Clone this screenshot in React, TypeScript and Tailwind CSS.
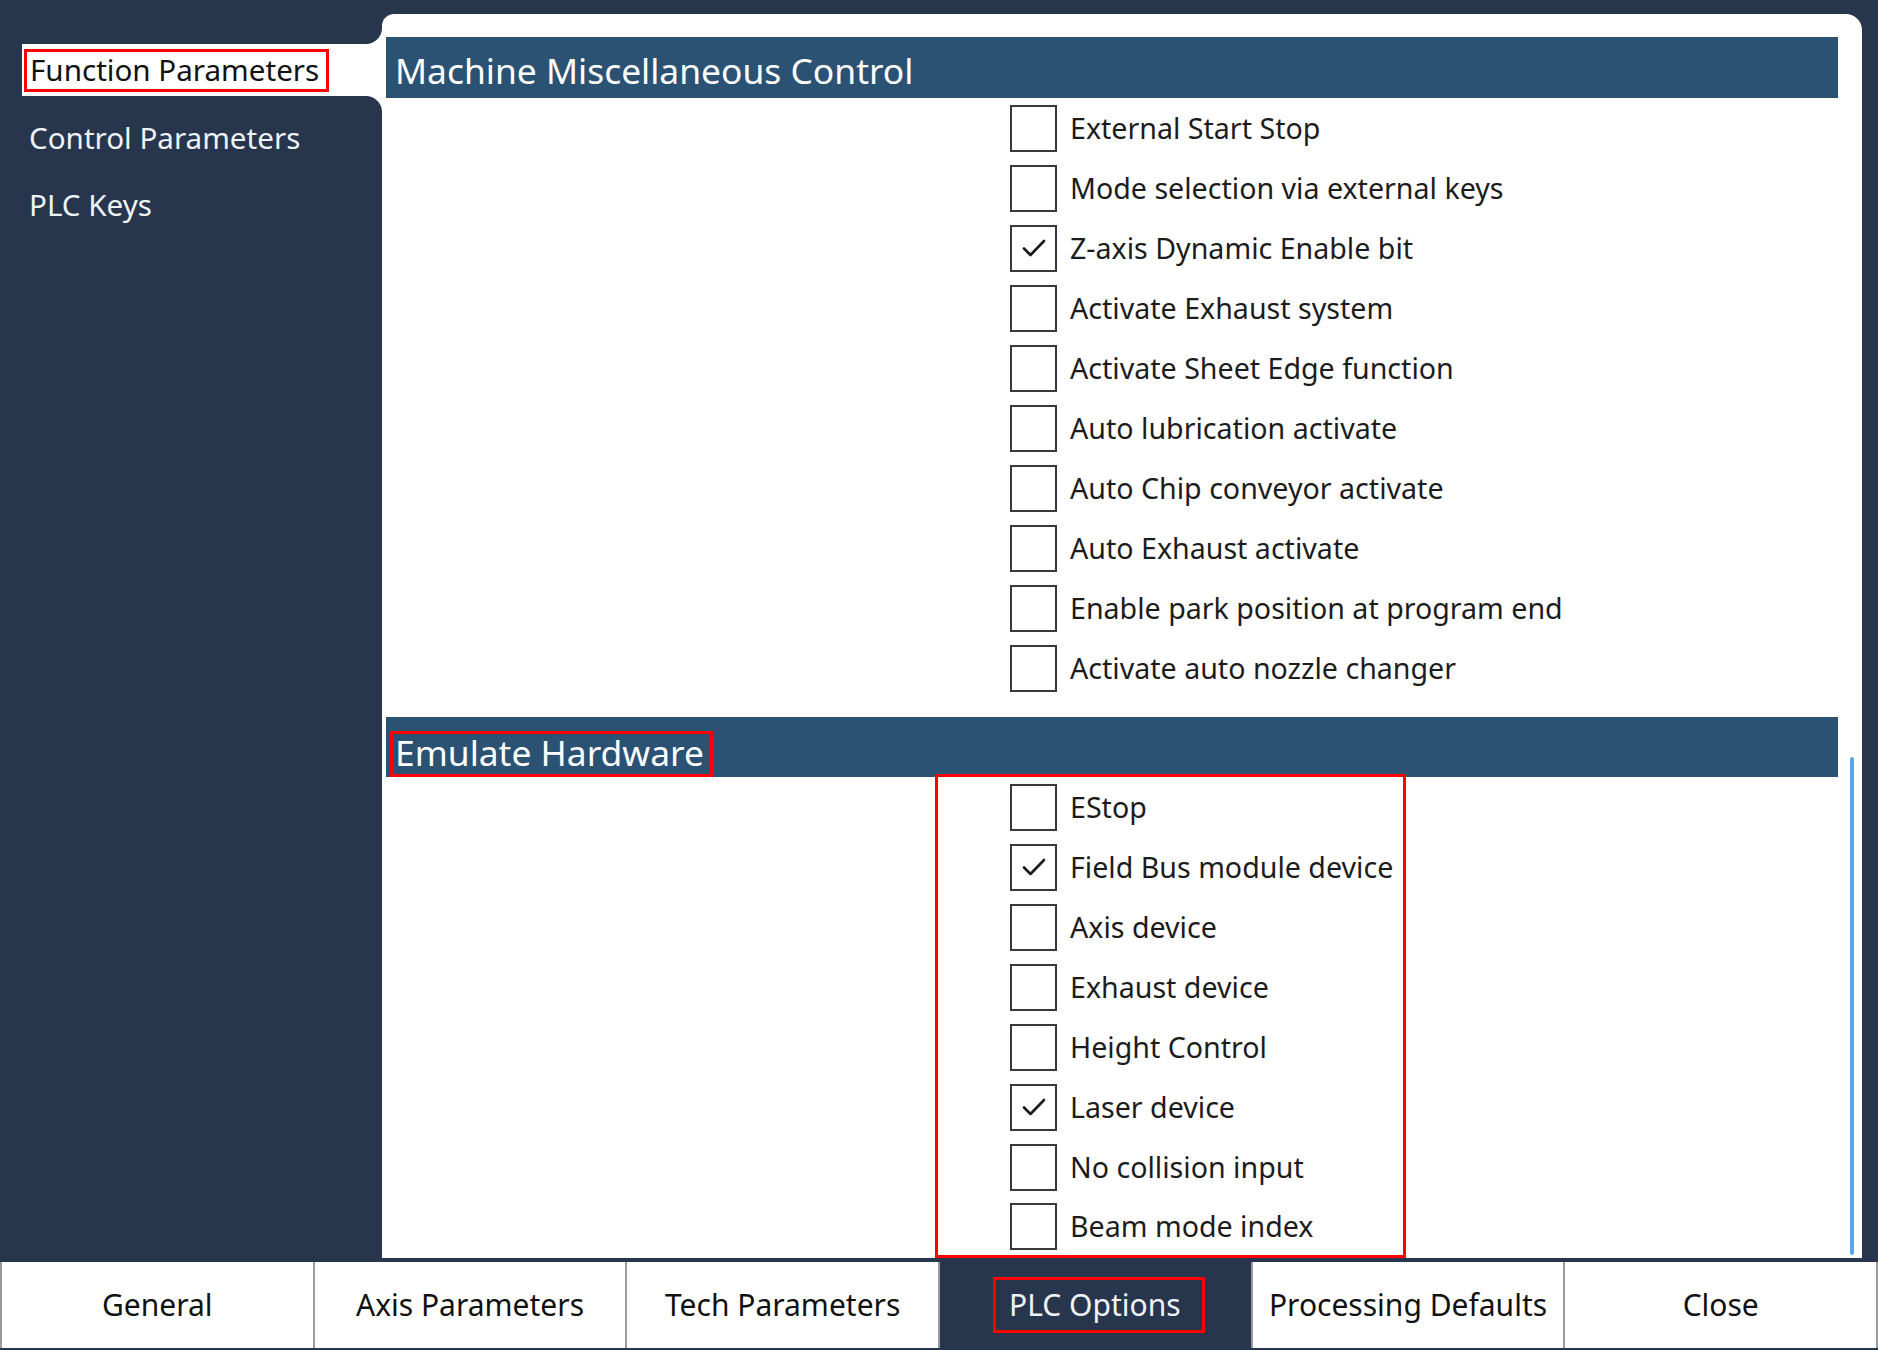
import React from 'react';

const DARK = 'bg-[#27354d]';

const miscItems: { label: string; checked: boolean }[] = [
  { label: 'External Start Stop', checked: false },
  { label: 'Mode selection via external keys', checked: false },
  { label: 'Z-axis Dynamic Enable bit', checked: true },
  { label: 'Activate Exhaust system', checked: false },
  { label: 'Activate Sheet Edge function', checked: false },
  { label: 'Auto lubrication activate', checked: false },
  { label: 'Auto Chip conveyor activate', checked: false },
  { label: 'Auto Exhaust activate', checked: false },
  { label: 'Enable park position at program end', checked: false },
  { label: 'Activate auto nozzle changer', checked: false },
];

const hardwareItems: { label: string; checked: boolean }[] = [
  { label: 'EStop', checked: false },
  { label: 'Field Bus module device', checked: true },
  { label: 'Axis device', checked: false },
  { label: 'Exhaust device', checked: false },
  { label: 'Height Control', checked: false },
  { label: 'Laser device', checked: true },
  { label: 'No collision input', checked: false },
  { label: 'Beam mode index', checked: false },
];

const tabs = ['General', 'Axis Parameters', 'Tech Parameters', 'PLC Options', 'Processing Defaults', 'Close'];

const CheckRow = ({ label, checked, h }: { label: string; checked: boolean; h: string }) => (
  <div className={`flex items-center gap-[13px] ${h}`}>
    <div className="w-[47px] h-[47px] border-2 border-[#3a3a3a] bg-white flex items-center justify-center shrink-0">
      {checked && (
        <svg width="26" height="22" viewBox="0 0 26 22" fill="none">
          <path d="M3 11.5 L9.5 18 L23 4" stroke="#1a1a1a" strokeWidth="2.6" strokeLinecap="round" strokeLinejoin="round" />
        </svg>
      )}
    </div>
    <span className="text-[28.6px] text-[#1c1c1c] leading-none whitespace-nowrap">{label}</span>
  </div>
);

const App = () => {
  return (
    <div className={`w-[1878px] h-[1350px] ${DARK} flex flex-col overflow-hidden`} style={{ fontFamily: '"Noto Sans", "Open Sans", sans-serif' }}>
      <div className="flex flex-1 min-h-0">
        {/* left navigation */}
        <div className="w-[382px] shrink-0 pt-[44px] text-[29.6px] text-[#eef3f8]">
          <div className="relative ml-[22px] h-[52px] bg-white flex items-center pl-[2px]">
            <div className="absolute right-0 -top-[16px] w-[16px] h-[16px] bg-white">
              <div className={`w-full h-full ${DARK} rounded-br-[16px]`} />
            </div>
            <div className="absolute right-0 -bottom-[16px] w-[16px] h-[16px] bg-white">
              <div className={`w-full h-full ${DARK} rounded-tr-[16px]`} />
            </div>
            <div className="h-[43px] w-[305px] border-[3px] border-[#ff0000] flex items-center pl-[3px] text-[#111] leading-none">
              Function Parameters
            </div>
          </div>
          <div className="mt-[8px] h-[67px] flex items-center pl-[29px] leading-none">Control Parameters</div>
          <div className="h-[67px] flex items-center pl-[29px] leading-none">PLC Keys</div>
        </div>

        {/* main panel */}
        <div className="relative flex-1 mt-[14px] mr-[16px] mb-[2px] bg-white rounded-tl-[12px] rounded-tr-[16px] overflow-hidden">
          <div className="mt-[23px] ml-[4px] mr-[24px] h-[61px] bg-[#2b5273] flex items-end pl-[9px] text-white text-[35.4px] leading-none">
            <span className="pb-[10px]">Machine Miscellaneous Control</span>
          </div>
          <div className="ml-[628px]">
            {miscItems.map((it) => (
              <CheckRow key={it.label} label={it.label} checked={it.checked} h="h-[60px]" />
            ))}
          </div>

          <div className="mt-[19px] ml-[4px] mr-[24px] h-[60px] bg-[#2b5273] flex items-end pl-[4px]">
            <div className="h-[46px] border-[3px] border-[#ff0000] flex items-center pl-[2px] pr-[6px] pb-[3px] text-white text-[35.4px] leading-none">
              Emulate Hardware
            </div>
          </div>
          <div className="-mt-[3px] ml-[553px] w-[471px] border-[3px] border-[#ff0000] pl-[72px]">
            {hardwareItems.map((it, i) => (
              <CheckRow key={it.label} label={it.label} checked={it.checked} h={i === hardwareItems.length - 1 ? 'h-[58px]' : 'h-[60px]'} />
            ))}
          </div>

          {/* scrollbar thumb */}
          <div className="absolute right-[8px] top-[743px] bottom-[3px] w-[4px] rounded-full bg-[#5aa8ea]" />
        </div>
      </div>

      {/* bottom tab bar */}
      <div className="h-[90px] shrink-0 flex py-[2px]">
        {tabs.map((t, i) => {
          const active = t === 'PLC Options';
          return (
            <div
              key={t}
              className={`flex-1 flex items-center justify-center border-r-2 border-[#9b9b9b] ${i === 0 ? 'border-l-2' : ''} ${
                active ? `${DARK} text-[#eef3f8]` : 'bg-white text-[#111]'
              } text-[30px] leading-none`}
            >
              {active ? (
                <div className="h-[56px] shrink-0 border-[3px] border-[#ff0000] flex items-center pl-[13px] pr-[21px] ml-[7px]">{t}</div>
              ) : (
                t
              )}
            </div>
          );
        })}
      </div>
    </div>
  );
};

export default App;
